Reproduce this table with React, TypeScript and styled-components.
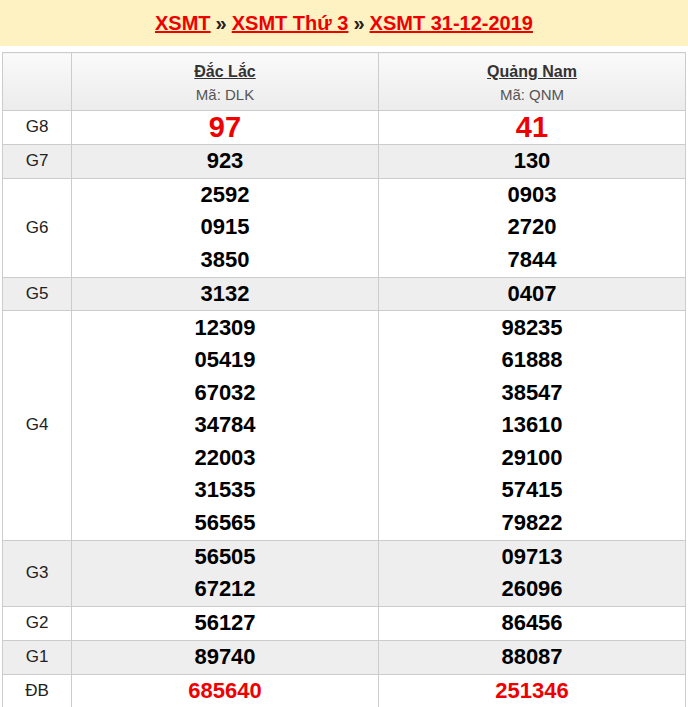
import React from "react";
import styled, { createGlobalStyle } from "styled-components";

const Global = createGlobalStyle`
  html, body { margin: 0; padding: 0; background: #fff; }
  body { font-family: "Liberation Sans", Arial, sans-serif; }
`;

const TitleBar = styled.div`
  background: #fff2c2;
  height: 46px;
  display: flex;
  align-items: center;
  justify-content: center;
  font-size: 20px;
  font-weight: bold;
  color: #222;
  margin-bottom: 6px;
`;

const TitleLink = styled.a`
  color: #e00;
  text-decoration: underline;
  padding: 0 5px;
`;

const Table = styled.table`
  border-collapse: collapse;
  margin: 0 2px;
  width: 684px;
  table-layout: fixed;
  border: 1px solid #ccc;
`;

const HeadCell = styled.th`
  background: linear-gradient(#fafafa, #ececec);
  border: 1px solid #ccc;
  height: 54px;
  padding: 3px 0 0;
  font-weight: normal;
  vertical-align: middle;
`;

const ProvinceName = styled.a`
  display: block;
  font-size: 16px;
  font-weight: bold;
  color: #333;
  text-decoration: underline;
  line-height: 23px;
`;

const ProvinceCode = styled.div`
  font-size: 15px;
  color: #555;
  line-height: 23px;
`;

const Row = styled.tr<{ $alt: boolean }>`
  background: ${(p) => (p.$alt ? "#eeeeee" : "#ffffff")};
`;

const LabelCell = styled.td`
  border: 1px solid #ccc;
  text-align: center;
  font-size: 17px;
  color: #222;
  padding: 0;
  vertical-align: middle;
`;

const NumCell = styled.td`
  border: 1px solid #ccc;
  text-align: center;
  padding: 0.15px 0;
  vertical-align: middle;
`;

const Num = styled.div<{ $size: number; $red: boolean }>`
  font-size: ${(p) => p.$size}px;
  font-weight: bold;
  line-height: 32.55px;
  color: ${(p) => (p.$red ? "#e00" : "#000")};
`;

type Prize = { label: string; a: string[]; b: string[]; size?: number; red?: boolean };

const prizes: Prize[] = [
  { label: "G8", a: ["97"], b: ["41"], size: 29, red: true },
  { label: "G7", a: ["923"], b: ["130"] },
  { label: "G6", a: ["2592", "0915", "3850"], b: ["0903", "2720", "7844"] },
  { label: "G5", a: ["3132"], b: ["0407"] },
  {
    label: "G4",
    a: ["12309", "05419", "67032", "34784", "22003", "31535", "56565"],
    b: ["98235", "61888", "38547", "13610", "29100", "57415", "79822"],
  },
  { label: "G3", a: ["56505", "67212"], b: ["09713", "26096"] },
  { label: "G2", a: ["56127"], b: ["86456"] },
  { label: "G1", a: ["89740"], b: ["88087"] },
  { label: "ĐB", a: ["685640"], b: ["251346"], red: true },
];

export default function App() {
  return (
    <>
      <Global />
      <TitleBar>
        <TitleLink href="#">XSMT</TitleLink>»
        <TitleLink href="#">XSMT Thứ 3</TitleLink>»
        <TitleLink href="#">XSMT 31-12-2019</TitleLink>
      </TitleBar>
      <Table>
        <colgroup>
          <col style={{ width: 69 }} />
          <col />
          <col />
        </colgroup>
        <thead>
          <tr>
            <HeadCell />
            <HeadCell>
              <ProvinceName href="#">Đắc Lắc</ProvinceName>
              <ProvinceCode>Mã: DLK</ProvinceCode>
            </HeadCell>
            <HeadCell>
              <ProvinceName href="#">Quảng Nam</ProvinceName>
              <ProvinceCode>Mã: QNM</ProvinceCode>
            </HeadCell>
          </tr>
        </thead>
        <tbody>
          {prizes.map((p, i) => (
            <Row key={p.label} $alt={i % 2 === 1}>
              <LabelCell>{p.label}</LabelCell>
              <NumCell>
                {p.a.map((n) => (
                  <Num key={n} $size={p.size ?? 22} $red={!!p.red}>{n}</Num>
                ))}
              </NumCell>
              <NumCell>
                {p.b.map((n) => (
                  <Num key={n} $size={p.size ?? 22} $red={!!p.red}>{n}</Num>
                ))}
              </NumCell>
            </Row>
          ))}
        </tbody>
      </Table>
    </>
  );
}
